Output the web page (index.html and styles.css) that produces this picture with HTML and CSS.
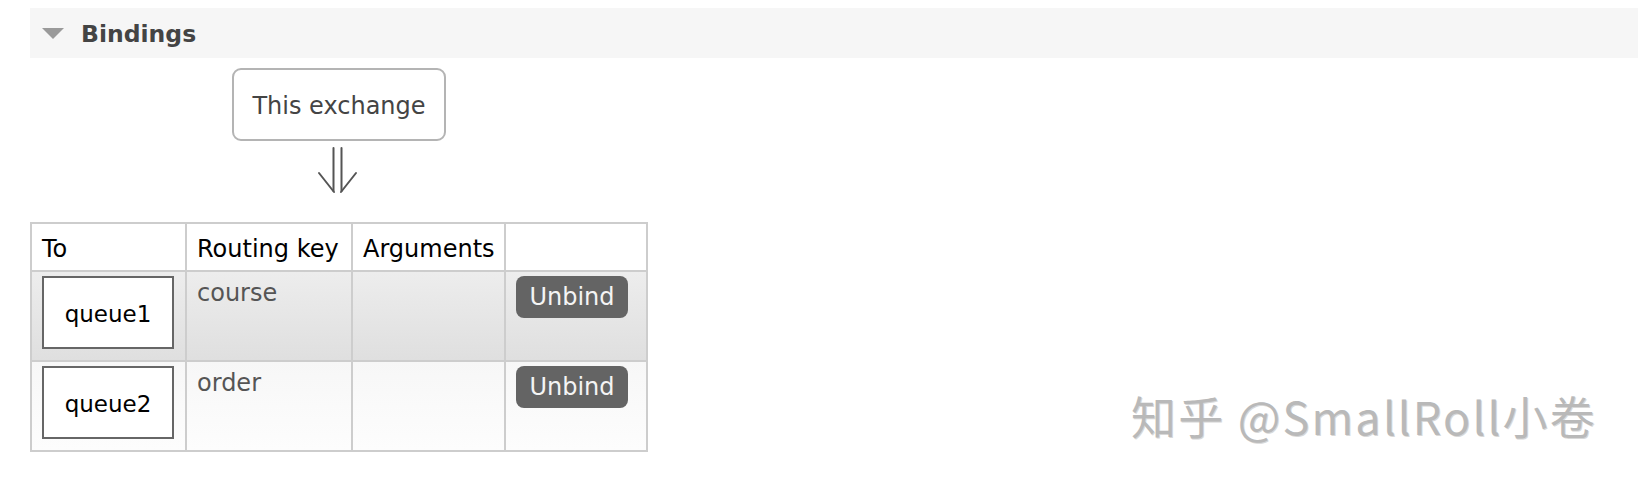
FILE: index.html
```html
<!DOCTYPE html>
<html lang="en">
<head>
<meta charset="utf-8">
<title>Bindings</title>
<link rel="stylesheet" href="styles.css">
</head>
<body>
<div class="section-header">
  <svg class="toggle" width="22" height="11" viewBox="0 0 22 11"><polygon points="0,0 22,0 11,11" fill="#9a9a9a"/></svg>
  <h2 class="section-title">Bindings</h2>
</div>
<div class="diagram">
  <div class="source-box">This exchange</div>
  <svg class="flow-arrow" width="42" height="48" viewBox="0 0 42 48">
    <g stroke="#555" stroke-width="2" fill="none" stroke-linecap="round">
      <line x1="16.5" y1="2" x2="16.5" y2="45"/>
      <line x1="24.5" y1="2" x2="24.5" y2="45"/>
      <line x1="2" y1="27" x2="17" y2="46"/>
      <line x1="39" y1="27" x2="24" y2="46"/>
    </g>
  </svg>
</div>
<table class="bindings">
  <thead>
    <tr>
      <th class="c-to">To</th>
      <th class="c-key">Routing key</th>
      <th class="c-args">Arguments</th>
      <th class="c-act"></th>
    </tr>
  </thead>
  <tbody>
    <tr class="alt1">
      <td class="cell-dest"><div class="dest-box">queue1</div></td>
      <td>course</td>
      <td></td>
      <td class="cell-act"><button class="unbind">Unbind</button></td>
    </tr>
    <tr class="alt2">
      <td class="cell-dest"><div class="dest-box">queue2</div></td>
      <td>order</td>
      <td></td>
      <td class="cell-act"><button class="unbind">Unbind</button></td>
    </tr>
  </tbody>
</table>
<div class="watermark">知乎 @SmallRoll小卷</div>
</body>
</html>
```
FILE: styles.css
```css
html, body {
  margin: 0;
  padding: 0;
  background: #fff;
}
body {
  font-family: "DejaVu Sans", Verdana, sans-serif;
  font-size: 24px;
  line-height: 28px;
  color: #444;
  width: 1638px;
  height: 486px;
  overflow: hidden;
  position: relative;
}
.section-header {
  margin: 8px 0 0 30px;
  height: 50px;
  background: #f6f6f6;
  display: flex;
  align-items: center;
  padding-left: 12px;
}
.toggle {
  display: block;
  margin-top: 1px;
}
.section-title {
  margin: 0 0 0 17px;
  padding-top: 2px;
  font-size: 23.5px;
  font-weight: bold;
  color: #444;
  line-height: 28px;
}
.diagram {
  margin: 10px 0 0 232px;
  width: 214px;
  display: flex;
  flex-direction: column;
  align-items: center;
}
.source-box {
  box-sizing: border-box;
  width: 214px;
  height: 73px;
  border: 2px solid #b4b4b4;
  border-radius: 9px;
  display: flex;
  align-items: center;
  justify-content: center;
  padding-top: 3px;
  color: #444;
}
.flow-arrow {
  display: block;
  margin-top: 5px;
  margin-right: 2px;
}
.bindings {
  margin: 28px 0 0 30px;
  border-collapse: separate;
  border-spacing: 0;
  table-layout: fixed;
  width: 618px;
  border-left: 2px solid #cdcdcd;
  border-top: 2px solid #cdcdcd;
}
.bindings th,
.bindings td {
  box-sizing: border-box;
  border-right: 2px solid #cdcdcd;
  border-bottom: 2px solid #cdcdcd;
  text-align: left;
  vertical-align: top;
}
.bindings th {
  font-weight: normal;
  color: #000;
  background: #fff;
  padding: 11px 10px 7px 10px;
  white-space: nowrap;
}
.c-to { width: 155px; }
.c-key { width: 166px; }
.c-args { width: 153px; }
.c-act { width: 142px; }
.bindings td {
  padding: 7px 10px 10px 10px;
  color: #555;
}
.alt1 td {
  background: linear-gradient(#ededed, #dfdfdf);
}
.alt2 td {
  background: linear-gradient(#f7f7f7, #fdfdfd);
}
.bindings td.cell-dest {
  padding: 4px 10px 11px 10px;
}
.bindings td.cell-act {
  padding: 4px 10px 10px 10px;
}
.dest-box {
  box-sizing: border-box;
  width: 132px;
  height: 73px;
  border: 2px solid #666;
  background: #fff;
  color: #000;
  font-size: 23px;
  display: flex;
  align-items: center;
  justify-content: center;
  padding-top: 2px;
}
.unbind {
  display: block;
  width: 112px;
  height: 42px;
  padding: 0;
  border: none;
  border-radius: 8px;
  background: #646464;
  color: #f4f4f4;
  font-family: "DejaVu Sans", Verdana, sans-serif;
  font-size: 24px;
  line-height: 28px;
}
.watermark {
  position: absolute;
  left: 1131px;
  top: 393px;
  font-family: "Noto Sans CJK SC", sans-serif;
  font-size: 45px;
  line-height: 1;
  letter-spacing: 2.2px;
  color: #b9b9b9;
  text-shadow: 1px 1px 0 #d8d8d8;
  white-space: nowrap;
}
```
